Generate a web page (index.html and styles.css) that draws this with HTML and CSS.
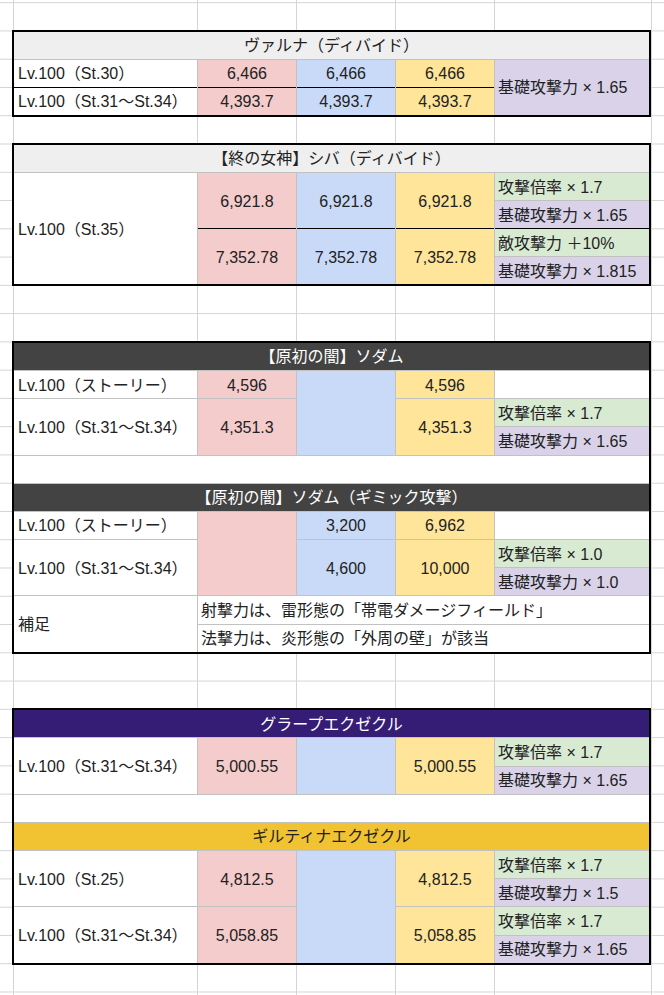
FILE: index.html
```html
<!DOCTYPE html>
<html lang="ja">
<head>
<meta charset="utf-8">
<title>Sheet</title>
<link rel="stylesheet" href="styles.css">
</head>
<body>
<div class="sheet">

  <div class="tbl t1">
    <div class="cell hd hd-gray">ヴァルナ（ディバイド）</div>
    <div class="cell lbl">Lv.100（St.30）</div>
    <div class="cell num pink">6,466</div>
    <div class="cell num blue">6,466</div>
    <div class="cell num yellow">6,466</div>
    <div class="cell note purple rs2">基礎攻撃力 × 1.65</div>
    <div class="cell lbl bt">Lv.100（St.31〜St.34）</div>
    <div class="cell num pink bt">4,393.7</div>
    <div class="cell num blue bt">4,393.7</div>
    <div class="cell num yellow bt">4,393.7</div>
  </div>

  <div class="tbl t2">
    <div class="cell hd hd-gray">【終の女神】シバ（ディバイド）</div>
    <div class="cell lbl rs4">Lv.100（St.35）</div>
    <div class="cell num pink rs2">6,921.8</div>
    <div class="cell num blue rs2">6,921.8</div>
    <div class="cell num yellow rs2">6,921.8</div>
    <div class="cell note green">攻撃倍率 × 1.7</div>
    <div class="cell note purple">基礎攻撃力 × 1.65</div>
    <div class="cell num pink rs2 bt">7,352.78</div>
    <div class="cell num blue rs2 bt">7,352.78</div>
    <div class="cell num yellow rs2 bt">7,352.78</div>
    <div class="cell note green bt">敵攻撃力 ＋10%</div>
    <div class="cell note purple">基礎攻撃力 × 1.815</div>
  </div>

  <div class="tbl t3">
    <div class="cell hd hd-dark">【原初の闇】ソダム</div>
    <div class="cell lbl">Lv.100（ストーリー）</div>
    <div class="cell num pink">4,596</div>
    <div class="cell num blue rs3"></div>
    <div class="cell num yellow">4,596</div>
    <div class="cell note"></div>
    <div class="cell lbl rs2">Lv.100（St.31〜St.34）</div>
    <div class="cell num pink rs2">4,351.3</div>
    <div class="cell num yellow rs2">4,351.3</div>
    <div class="cell note green">攻撃倍率 × 1.7</div>
    <div class="cell note purple">基礎攻撃力 × 1.65</div>
    <div class="cell empty"></div>
    <div class="cell hd hd-dark">【原初の闇】ソダム（ギミック攻撃）</div>
    <div class="cell lbl">Lv.100（ストーリー）</div>
    <div class="cell num pink rs3"></div>
    <div class="cell num blue">3,200</div>
    <div class="cell num yellow">6,962</div>
    <div class="cell note"></div>
    <div class="cell lbl rs2">Lv.100（St.31〜St.34）</div>
    <div class="cell num blue rs2">4,600</div>
    <div class="cell num yellow rs2">10,000</div>
    <div class="cell note green">攻撃倍率 × 1.0</div>
    <div class="cell note purple">基礎攻撃力 × 1.0</div>
    <div class="cell lbl rs2">補足</div>
    <div class="cell note span4">射撃力は、雷形態の「帯電ダメージフィールド」</div>
    <div class="cell note span4">法撃力は、炎形態の「外周の壁」が該当</div>
  </div>

  <div class="tbl t4">
    <div class="cell hd hd-purple">グラープエクゼクル</div>
    <div class="cell lbl rs2">Lv.100（St.31〜St.34）</div>
    <div class="cell num pink rs2">5,000.55</div>
    <div class="cell num blue rs2"></div>
    <div class="cell num yellow rs2">5,000.55</div>
    <div class="cell note green">攻撃倍率 × 1.7</div>
    <div class="cell note purple">基礎攻撃力 × 1.65</div>
    <div class="cell empty"></div>
    <div class="cell hd hd-gold">ギルティナエクゼクル</div>
    <div class="cell lbl rs2">Lv.100（St.25）</div>
    <div class="cell num pink rs2">4,812.5</div>
    <div class="cell num blue rs4"></div>
    <div class="cell num yellow rs2">4,812.5</div>
    <div class="cell note green">攻撃倍率 × 1.7</div>
    <div class="cell note purple">基礎攻撃力 × 1.5</div>
    <div class="cell lbl rs2">Lv.100（St.31〜St.34）</div>
    <div class="cell num pink rs2">5,058.85</div>
    <div class="cell num yellow rs2">5,058.85</div>
    <div class="cell note green">攻撃倍率 × 1.7</div>
    <div class="cell note purple">基礎攻撃力 × 1.65</div>
  </div>

</div>
</body>
</html>
```
FILE: styles.css
```css
* {
  box-sizing: border-box;
}

html, body {
  margin: 0;
  padding: 0;
  background: #ffffff;
}

body {
  font-family: "Liberation Sans", "Noto Sans CJK JP", sans-serif;
  font-size: 16px;
  color: #222222;
}

.sheet {
  width: 664px;
  height: 995px;
  overflow: hidden;
  display: grid;
  grid-template-columns: 13px 637px 14px;
  grid-template-rows: 2.7px repeat(35, 28.27px) 1fr;
  background-color: #ffffff;
  background-image:
    linear-gradient(to right,
      transparent 0 13px, #d4d4d4 13px 14px,
      transparent 14px 197px, #d4d4d4 197px 198px,
      transparent 198px 296px, #d4d4d4 296px 297px,
      transparent 297px 395px, #d4d4d4 395px 396px,
      transparent 396px 494px, #d4d4d4 494px 495px,
      transparent 495px 651px, #d4d4d4 651px 652px,
      transparent 652px),
    linear-gradient(to bottom, #d4d4d4 0 1px, transparent 1px);
  background-size: 100% 100%, 100% 28.27px;
  background-position: 0 0, 0 2.2px;
  background-repeat: no-repeat, repeat;
}

.tbl {
  grid-column: 2;
  margin: -1px;
  border: 2px solid #000000;
  background: #c2c2c2;
  display: grid;
  grid-template-columns: 183px 98px 98px 98px 1fr;
  grid-auto-rows: 1fr;
  gap: 1px;
}

.t1 { grid-row: 3 / 6; }
.t2 { grid-row: 7 / 12; }
.t3 { grid-row: 14 / 25; }
.t4 { grid-row: 27 / 36; }

.cell {
  display: flex;
  align-items: center;
  background: #ffffff;
  padding-top: 1px;
  white-space: nowrap;
  overflow: hidden;
  line-height: 1.2;
}

.lbl {
  padding-left: 4px;
}

.num {
  justify-content: center;
}

.note {
  padding-left: 3px;
}

.hd {
  grid-column: span 5;
  justify-content: center;
}

.empty {
  grid-column: span 5;
}

.span4 {
  grid-column: span 4;
}

.rs2 { grid-row: span 2; }
.rs3 { grid-row: span 3; }
.rs4 { grid-row: span 4; }

.bt {
  border-top: 1px solid #000000;
  margin-top: -1px;
}

.hd-gray {
  background: #efefef;
}

.hd-dark {
  background: #434343;
  color: #ffffff;
}

.hd-purple {
  background: #351c75;
  color: #ffffff;
}

.hd-gold {
  background: #f1c232;
}

.pink { background: #f4cccc; }
.blue { background: #c9daf8; }
.yellow { background: #ffe599; }
.green { background: #d9ead3; }
.purple { background: #d9d2e9; }
```
